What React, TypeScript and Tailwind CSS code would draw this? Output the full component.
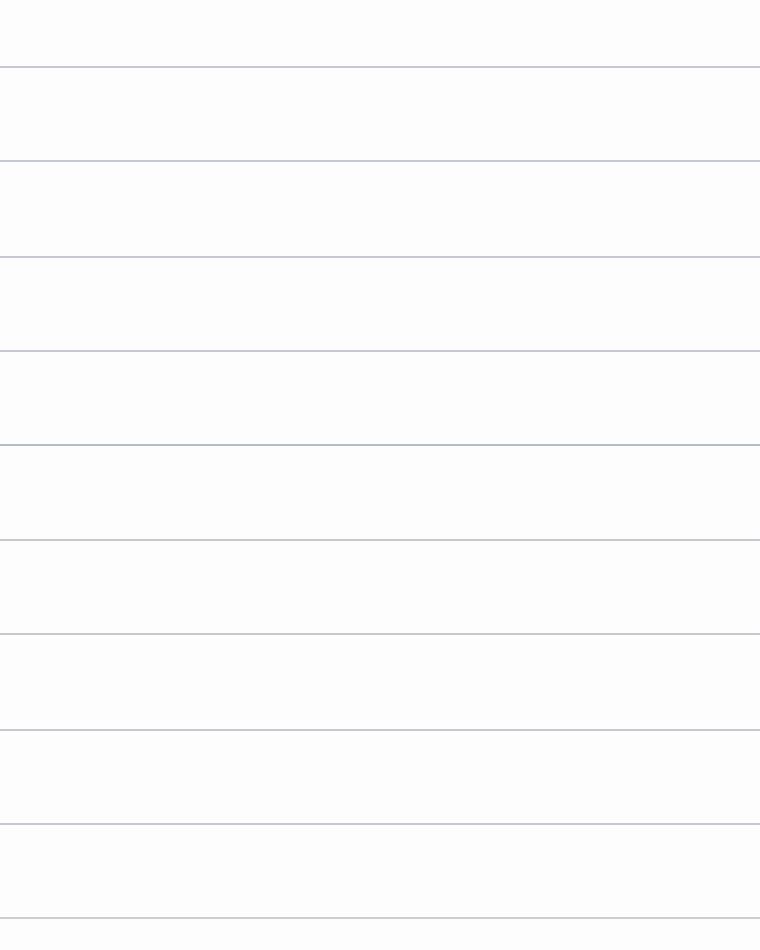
const rows = [
  { h: "h-[68px]", line: "border-[#c6c8d0]" },
  { h: "h-[94px]", line: "border-[#c3c8d3]" },
  { h: "h-[96px]", line: "border-[#c6c8d0]" },
  { h: "h-[94px]", line: "border-[#c5c8cf]" },
  { h: "h-[94px]", line: "border-[#b5bcc8]" },
  { h: "h-[95px]", line: "border-[#c3c9cc]" },
  { h: "h-[94px]", line: "border-[#c3c9cc]" },
  { h: "h-[96px]", line: "border-[#c6c8d0]" },
  { h: "h-[94px]", line: "border-[#c6c8d0]" },
  { h: "h-[94px]", line: "border-[#cbcdd1]" },
]

export default function App() {
  return (
    <div className="w-[760px] h-[950px] bg-[#fdfdfd] flex flex-col overflow-hidden">
      {rows.map((r, i) => (
        <div key={i} className={`${r.h} shrink-0 border-b-2 ${r.line}`} />
      ))}
    </div>
  )
}
